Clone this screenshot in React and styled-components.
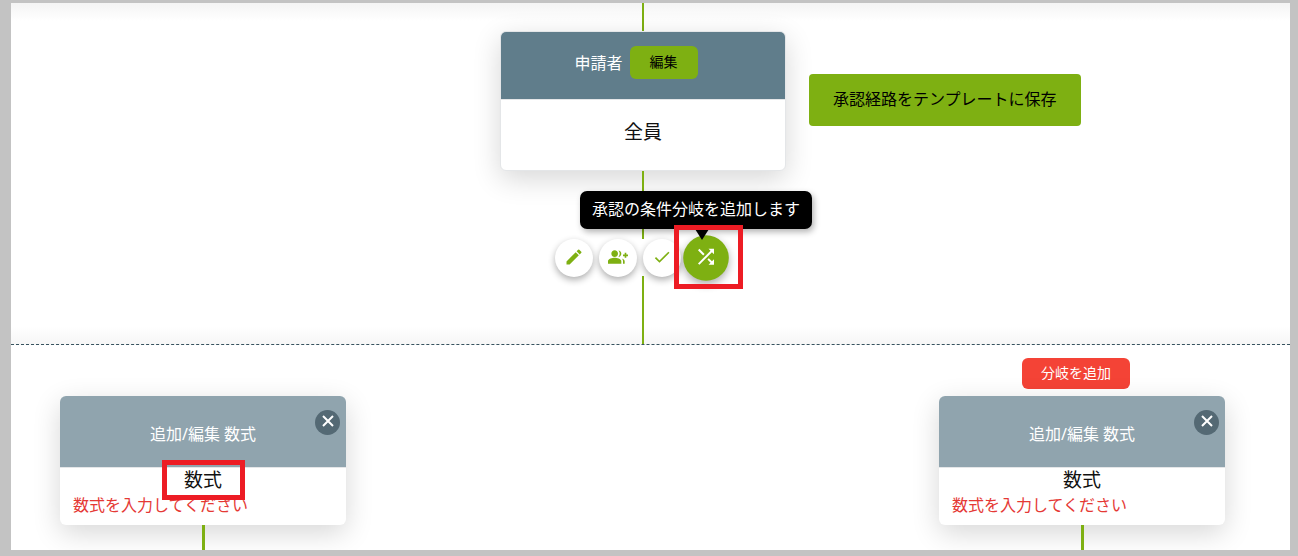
import React from 'react';
import styled, { createGlobalStyle, ThemeProvider } from 'styled-components';
import { MdCheck, MdEdit, MdGroupAdd, MdShuffle } from 'react-icons/md';

const theme = {
  frame: '#c3c3c3',
  green: '#7eb012',
  slate: '#607d8b',
  slateLight: '#90a4ae',
  slateDark: '#546974',
  danger: '#f44336',
  error: '#e53935',
  marker: '#ed1c24',
  text: '#111111',
};

const GlobalStyle = createGlobalStyle`
  * {
    box-sizing: border-box;
  }

  body {
    margin: 0;
    background: ${theme.frame};
    font-family: "Noto Sans", "Noto Sans CJK JP", sans-serif;
    font-size: 16px;
    color: ${theme.text};
  }

  button {
    font-family: inherit;
    border: none;
    cursor: pointer;
  }
`;

const Page = styled.div`
  padding: 3px 8px 6px 11px;
`;

const Panel = styled.main`
  background: #ffffff;
  overflow: hidden;
`;

const FlowSection = styled.section`
  display: flex;
  flex-direction: column;
  align-items: center;
  padding-right: 15px;
  background: linear-gradient(#f4f4f4, #ffffff 18px, #ffffff calc(100% - 18px), #f6f6f6);
  border-bottom: 1px dashed #37535f;
`;

const Connector = styled.div`
  width: ${({ $width }) => $width || 2}px;
  height: ${({ $height }) => $height}px;
  background: ${({ theme }) => theme.green};
`;

const ApplicantRow = styled.div`
  width: 100%;
  display: grid;
  grid-template-columns: 1fr 286px 1fr;
  column-gap: 23px;
`;

const Card = styled.article`
  width: 286px;
  background: #ffffff;
  border-radius: 6px;
  box-shadow: 0 8px 28px rgba(0, 0, 0, 0.16);
`;

const ApplicantCard = styled(Card)`
  grid-column: 2;
  border: 1px solid #e4e6e8;
`;

const ApplicantHeader = styled.header`
  display: flex;
  justify-content: center;
  gap: 7px;
  padding: 14px 14px 19px 0;
  background: ${({ theme }) => theme.slate};
  border-bottom: 1px solid #e4e6e8;
  border-radius: 5px 5px 0 0;
  color: #ffffff;
  line-height: 34px;
`;

const EditButton = styled.button`
  height: 33px;
  padding: 0 20px 4px;
  background: ${({ theme }) => theme.green};
  border-radius: 6px;
  color: #000000;
  font-size: 14px;
`;

const ApplicantName = styled.p`
  margin: 0;
  padding: 18px 0 24px;
  font-size: 19px;
  line-height: 28px;
  text-align: center;
`;

const SaveButton = styled.button`
  justify-self: start;
  margin-top: 43px;
  height: 52px;
  padding: 0 24px 4px;
  background: ${({ theme }) => theme.green};
  border-radius: 4px;
  color: #000000;
  font-size: 16px;
`;

const Actions = styled.div`
  display: flex;
  height: 37px;
`;

const ActionSlot = styled.div`
  position: relative;
  margin-right: 6px;
`;

const ActionButton = styled.button`
  display: flex;
  align-items: center;
  justify-content: center;
  width: 38px;
  height: 38px;
  padding: 0 0 2px;
  border-radius: 50%;
  background: ${({ $active, theme }) => ($active ? theme.green : '#ffffff')};
  color: ${({ $active, theme }) => ($active ? '#ffffff' : theme.green)};
  box-shadow: 0 3px 7px rgba(0, 0, 0, 0.32);
  font-size: 20px;
  transform: ${({ $active }) => ($active ? 'scale(1.2)' : 'none')};
`;

const Tooltip = styled.div`
  position: absolute;
  bottom: 47px;
  left: -107px;
  z-index: 2;
  padding: 6px 12px 8px;
  background: #000000;
  border-radius: 7px;
  box-shadow: 2px 3px 6px rgba(0, 0, 0, 0.3);
  color: #ffffff;
  line-height: 24px;
  white-space: nowrap;

  &::after {
    content: '';
    position: absolute;
    top: 100%;
    left: 115px;
    border: 7px solid transparent;
    border-top: 11px solid #000000;
    border-bottom: none;
  }
`;

const Marker = styled.span`
  position: absolute;
  inset: ${({ $inset }) => $inset};
  z-index: 3;
  border: 5px solid ${({ theme }) => theme.marker};
  pointer-events: none;
`;

const BranchSection = styled.section`
  display: flex;
  justify-content: space-between;
  align-items: flex-end;
  padding: 13px 65px 0 49px;
`;

const Branch = styled.div`
  display: flex;
  flex-direction: column;
  align-items: center;
`;

const AddBranchButton = styled.button`
  height: 31px;
  margin: 0 12px 7px 0;
  padding: 0 19px 3px;
  background: ${({ theme }) => theme.danger};
  border-radius: 6px;
  color: #ffffff;
  font-size: 14px;
`;

const BranchHeader = styled.header`
  position: relative;
  padding: 26px 0 20px;
  background: ${({ theme }) => theme.slateLight};
  border-bottom: 1px solid #e4e6e8;
  border-radius: 6px 6px 0 0;
  color: #ffffff;
  line-height: 25px;
  text-align: center;
`;

const CloseButton = styled.button`
  position: absolute;
  top: 14px;
  right: 6px;
  display: flex;
  align-items: center;
  justify-content: center;
  width: 25px;
  height: 25px;
  padding: 0 0 3px;
  border-radius: 50%;
  background: ${({ theme }) => theme.slateDark};
  color: #ffffff;
`;

const BranchBody = styled.div`
  padding: 0 13px 7px;
`;

const BranchTitle = styled.h2`
  position: relative;
  width: fit-content;
  margin: 0 auto;
  font-size: 19px;
  font-weight: 400;
  line-height: 24px;
`;

const ErrorText = styled.p`
  margin: 0;
  color: ${({ theme }) => theme.error};
  line-height: 26px;
`;

const actions = [
  { label: '編集', icon: <MdEdit /> },
  { label: '承認者を追加', icon: <MdGroupAdd /> },
  { label: '承認', icon: <MdCheck /> },
];

const CloseIcon = () => (
  <svg width="12" height="12" viewBox="0 0 12 12" stroke="currentColor" strokeWidth="2">
    <path d="M1 1L11 11M11 1L1 11" />
  </svg>
);

const ConditionBranch = ({ canAdd, marked }) => (
  <Branch>
    {canAdd && <AddBranchButton type="button">分岐を追加</AddBranchButton>}
    <Card>
      <BranchHeader>
        追加/編集 数式
        <CloseButton type="button" aria-label="閉じる">
          <CloseIcon />
        </CloseButton>
      </BranchHeader>
      <BranchBody>
        <BranchTitle>
          数式
          {marked && <Marker $inset="-8px -23px -8px -22px" />}
        </BranchTitle>
        <ErrorText>数式を入力してください</ErrorText>
      </BranchBody>
    </Card>
    <Connector $width={3} $height={25} />
  </Branch>
);

const App = () => {
  return (
    <ThemeProvider theme={theme}>
      <GlobalStyle />
      <Page>
        <Panel>
          <FlowSection>
            <Connector $height={28} />
            <ApplicantRow>
              <ApplicantCard>
                <ApplicantHeader>
                  <span>申請者</span>
                  <EditButton type="button">編集</EditButton>
                </ApplicantHeader>
                <ApplicantName>全員</ApplicantName>
              </ApplicantCard>
              <SaveButton type="button">承認経路をテンプレートに保存</SaveButton>
            </ApplicantRow>
            <Connector $height={68} />
            <Actions>
              {actions.map(({ label, icon }) => (
                <ActionSlot key={label}>
                  <ActionButton type="button" aria-label={label}>
                    {icon}
                  </ActionButton>
                </ActionSlot>
              ))}
              <ActionSlot>
                <ActionButton type="button" $active aria-label="条件分岐" aria-describedby="branch-tip">
                  <MdShuffle />
                </ActionButton>
                <Tooltip id="branch-tip" role="tooltip">承認の条件分岐を追加します</Tooltip>
                <Marker $inset="-14px -18px -13px -13px" />
              </ActionSlot>
            </Actions>
            <Connector $height={68} />
          </FlowSection>
          <BranchSection>
            <ConditionBranch marked />
            <ConditionBranch canAdd />
          </BranchSection>
        </Panel>
      </Page>
    </ThemeProvider>
  );
};

export default App;
